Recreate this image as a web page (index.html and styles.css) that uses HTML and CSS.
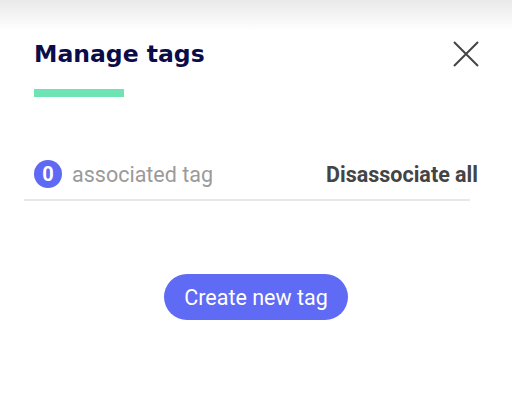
FILE: index.html
```html
<html>
<head>
    <link rel="stylesheet" href="styles.css">
    <title>Manage tags</title>
</head>
<body>
<div class="top_shadow"></div>
<div class="panel">
    <div class="header">
        <h1 class="title">Manage tags</h1>
        <button class="close" type="button" aria-label="Close">
            <svg width="28" height="28" viewBox="0 0 28 28">
                <path d="M2 2 L26 26 M26 2 L2 26" stroke="#444" stroke-width="2" fill="none"/>
            </svg>
        </button>
    </div>
    <div class="accent"></div>

    <div class="tags_row">
        <div class="count">
            <span class="badge">0</span>
            <span class="count_label">associated tag</span>
        </div>
        <a class="disassociate" href="#">Disassociate all</a>
    </div>
    <div class="divider"></div>

    <div class="actions">
        <button class="create" type="button">Create new tag</button>
    </div>
</div>
</body>
</html>
```

FILE: styles.css
```css
body {
    margin: 0;
    background-color: white;
    font-family: Roboto, "Liberation Sans", sans-serif;
}

.top_shadow {
    height: 30px;
    background: linear-gradient(#e9e9e9, #ffffff);
}

.panel {
    padding: 0 34px;
}

.header {
    display: flex;
    justify-content: space-between;
    align-items: center;
    margin-top: 10px;
}

.title {
    margin: 0;
    font-family: "DejaVu Sans", sans-serif;
    font-weight: bold;
    font-size: 23.5px;
    color: #0b0c4a;
}

.close {
    border: none;
    background: none;
    padding: 0;
    width: 28px;
    height: 28px;
    margin-right: -2px;
}

.accent {
    width: 90px;
    height: 8px;
    background-color: #6ee3b4;
    margin-top: 21px;
}

.tags_row {
    display: flex;
    justify-content: space-between;
    align-items: center;
    margin-top: 63px;
}

.count {
    display: flex;
    align-items: center;
    gap: 10px;
}

.badge {
    width: 28px;
    height: 28px;
    border-radius: 50%;
    background-color: #5e69f4;
    color: white;
    font-weight: bold;
    font-size: 20px;
    display: flex;
    align-items: center;
    justify-content: center;
}

.count_label {
    color: #9a9a9a;
    font-size: 21.5px;
}

.disassociate {
    color: #444;
    font-weight: bold;
    font-size: 21.5px;
    text-decoration: none;
}

.divider {
    height: 2px;
    background-color: #e8e8e8;
    margin: 11px 8px 0 -10px;
}

.actions {
    display: flex;
    justify-content: center;
    margin-top: 73px;
}

.create {
    width: 184px;
    height: 46px;
    border: none;
    border-radius: 23px;
    background-color: #5f6af5;
    color: white;
    font-family: Roboto, "Liberation Sans", sans-serif;
    font-size: 21.5px;
}
```
